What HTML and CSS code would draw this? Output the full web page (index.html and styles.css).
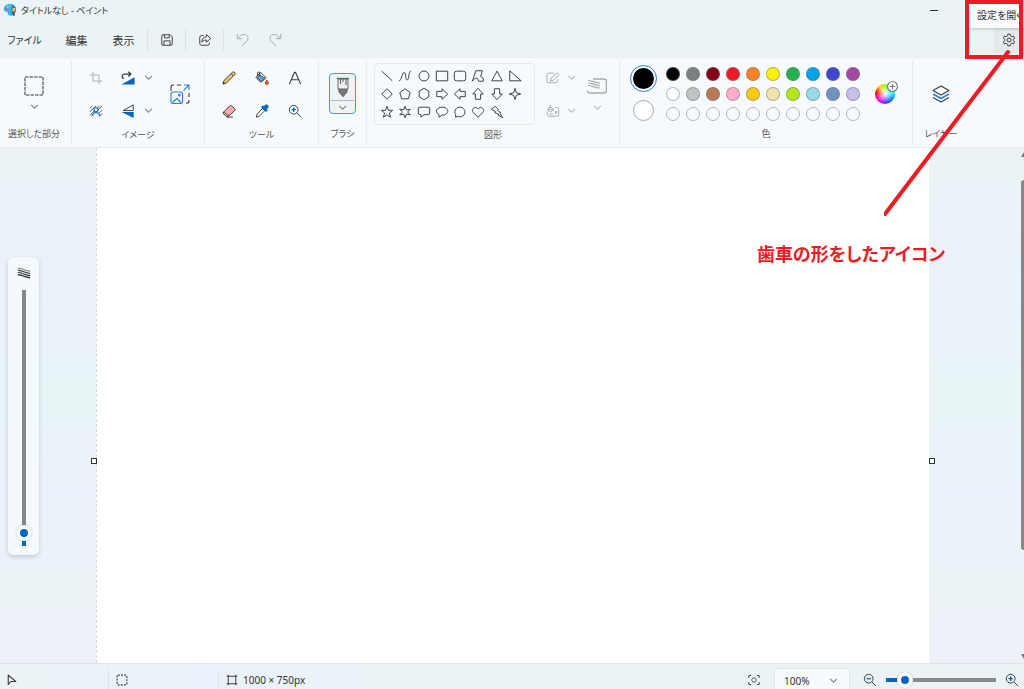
FILE: index.html
```html
<!DOCTYPE html>
<html lang="ja">
<head>
<meta charset="utf-8">
<meta name="viewport" content="width=device-width, initial-scale=1">
<title>タイトルなし - ペイント</title>
<link rel="stylesheet" href="styles.css">
</head>
<body>
<svg class="defs" aria-hidden="true">
  <symbol id="chevron" viewBox="0 0 8 8"><path d="M1 2.500 4 5.500 7 2.500"/></symbol>
</svg>
<div class="app">
  <header class="titlebar">
    <svg class="logo" viewBox="0 0 14 14" aria-hidden="true">
      <path d="M6.500 1C3 1 .8 3.500.8 6.300c0 2.200 1.700 2.400 2.900 2.500 1.200.1 1 1.200 1.300 2.300.4 1.300 2 1.900 3.600 1.300C11.500 11.500 13 9 13 6.500 13 3 10 1 6.500 1z" fill="#38b6ec"/>
      <path d="M8 1.200C11 1.700 13 4 13 6.500c0 2.600-1.600 5.100-4.400 5.900z" fill="#1787d4"/>
      <circle cx="3.300" cy="6.300" r="1" fill="#e8532f"/><circle cx="4.700" cy="3.800" r="1" fill="#ffd23f"/><circle cx="7.800" cy="3.200" r="1" fill="#6ee08a"/>
      <path d="M9.300 5h3l-.4 4h-2.200z" fill="#f2b45b"/><path d="M9.700 8.500h2.200L11.500 13h-1.300z" fill="#7a4a2a"/>
    </svg>
    <h1 class="title">タイトルなし - ペイント</h1>
    <button class="minimize" aria-label="最小化"></button>
  </header>

  <nav class="menubar" aria-label="メニュー">
    <button class="menu">ファイル</button>
    <button class="menu">編集</button>
    <button class="menu">表示</button>
    <button class="quick" aria-label="保存"><svg class="icon" viewBox="0 0 16 16"><path d="M3.500 2h8L14 4.500v8a1.500 1.500 0 0 1-1.500 1.500h-9A1.500 1.500 0 0 1 2 12.500v-9A1.500 1.500 0 0 1 3.500 2zM5 2v3.500h5.500V2M4.500 14V9h7v5"/></svg></button>
    <button class="quick" aria-label="共有"><svg class="icon" viewBox="0 0 16 16"><path d="M6.500 3H4a2 2 0 0 0-2 2v7a2 2 0 0 0 2 2h7a2 2 0 0 0 2-2v-1.500M9.500 1.800l5 4.400-5 4.300V8c-2.500 0-4 .8-5.200 2.500C4.500 7 6.500 4.500 9.500 4.300z"/></svg></button>
    <button class="quick history" aria-label="元に戻す" disabled><svg class="icon" viewBox="0 0 16 16"><path d="M1.500 1v5.500H7M1.800 6.200 5.500 2.800c4.500-3.600 10.500 1 7.500 5.700L6.500 15"/></svg></button>
    <button class="quick redo" aria-label="やり直し" disabled><svg class="icon" viewBox="0 0 16 16"><path d="M14.500 1v5.500H9M14.200 6.200 10.500 2.800C6-.8 0 3.800 3 8.500L9.500 15"/></svg></button>
    <button class="settings" aria-label="設定を開く"><svg class="icon gear" viewBox="0 0 16 16"><circle cx="8" cy="8" r="2.200"/><path d="M6.800 1.300h2.400l.5 2 1.500.9 2-.6 1.200 2.100L13 7.200v1.600l1.400 1.500-1.200 2.100-2-.6-1.500.9-.5 2H6.800l-.5-2-1.500-.9-2 .6-1.200-2.100L3 8.800V7.200L1.600 5.700l1.200-2.100 2 .6 1.500-.9z"/></svg></button>
  </nav>

  <main class="ribbon">
    <section class="group select-group">
      <div class="tools stack">
        <button class="tool large" aria-label="選択"><svg class="icon i20" viewBox="0 0 20 20"><rect x="1" y="1" width="18" height="18" stroke-dasharray="3.500 1"/></svg></button>
        <button class="more" aria-label="選択オプション"><svg class="chev"><use href="#chevron"/></svg></button>
      </div>
      <h2>選択した部分</h2>
    </section>

    <section class="group">
      <div class="tools image-tools">
        <button class="tool" aria-label="トリミング" disabled><svg class="icon" viewBox="0 0 16 16"><path d="M4.500 1v10.500H15M1 4.500h10.500V15"/></svg></button>
        <button class="tool" aria-label="回転"><svg class="icon" viewBox="0 0 16 16"><path d="M15.500 7v8.500H.5z" fill="#0067c0" stroke="none"/><path d="M3 9C0 6.500 1.500 3.500 4.500 3.500H11M8.300.8l3 2.700-3 2.700" stroke-width="1.400"/></svg></button>
        <button class="more" aria-label="回転オプション"><svg class="chev"><use href="#chevron"/></svg></button>
        <button class="tool resize" aria-label="サイズ変更"><svg class="icon i20" viewBox="0 0 20 20"><path d="M1 7V3a2 2 0 0 1 2-2h1M7 1h4M19 9v4M19 16v1a2 2 0 0 1-2 2h-1"/><g stroke="#2b7cd3"><rect x="1" y="8" width="11.500" height="11.500" rx="2"/><path d="m2.500 18.500 4.300-4 4.200 4M13.500 6.500l5-5M14 1h5v5"/><circle cx="9.300" cy="11.200" r=".8"/></g></svg></button>
        <button class="tool" aria-label="背景の削除"><svg class="icon" viewBox="0 0 16 16"><path d="M1 5l3-3M1 9l7-7M1 13 12 2M3 14 15 2M8 14l7-7M12 14l3-3" stroke-width="1"/><path d="M4 14c0-5.500 8-5.500 8 0" fill="#f7fafd" stroke="#2b7cd3" stroke-width="1.500"/><circle cx="8" cy="6.500" r="2.300" fill="#f7fafd" stroke="#2b7cd3" stroke-width="1.500"/></svg></button>
        <button class="tool" aria-label="反転"><svg class="icon" viewBox="0 0 16 16"><path d="M14 1v6.500H2.500z"/><path d="M14.500 9v7L.5 9z" fill="#0067c0" stroke="none"/></svg></button>
        <button class="more" aria-label="反転オプション"><svg class="chev"><use href="#chevron"/></svg></button>
      </div>
      <h2>イメージ</h2>
    </section>

    <section class="group">
      <div class="tools tool-grid">
        <button class="tool" aria-label="鉛筆"><svg class="icon" viewBox="0 0 16 16"><path d="M1.200 14.800l1-3.800L11.800 1.600a1.800 1.800 0 0 1 2.600 2.600L5 13.800z" fill="#f3c567"/><path d="m10.500 3 2.500 2.500"/><path d="m1.200 14.800 .5-2 1.500 1.500z" fill="#444"/></svg></button>
        <button class="tool" aria-label="塗りつぶし"><svg class="icon" viewBox="0 0 16 16"><path d="M6.500 1.500 12.500 7.500l-5 5a1 1 0 0 1-1.400 0L1.500 7.900a1 1 0 0 1 0-1.400z" fill="#fff"/><path d="m5 4.500 6.500 3.800-4.500 4L2.500 7.500z" fill="#5ea5e4"/><path d="M5.500 6V2.500a1.300 1.300 0 0 0-2.600 0V5"/><path d="M13.500 10c1 1.500 2 2.500 2 3.700a2 2 0 0 1-4 0c0-1.200 1-2.200 2-3.700z" fill="#e04e1b" stroke="#b73510" stroke-width=".6"/></svg></button>
        <button class="tool" aria-label="テキスト"><svg class="icon" viewBox="0 0 16 16"><path d="M1.500 15 7.500 1.500h1l6 13.500M4 10h8" stroke-width="1.300"/></svg></button>
        <button class="tool" aria-label="消しゴム"><svg class="icon" viewBox="0 0 16 16"><path d="M1.500 9.500 9 2a1.400 1.400 0 0 1 2 0l3.500 3.500a1.400 1.400 0 0 1 0 2L7.500 14H5.200L1.500 11z" fill="#f7aaa9"/><path d="m2 9.200 5.600 4.600L5.200 14 1.500 11z" fill="#fff"/><path d="M5.500 15h7"/></svg></button>
        <button class="tool" aria-label="色の選択"><svg class="icon" viewBox="0 0 16 16"><path d="m8.500 5 2.700 2.700-6.400 6.100L1.500 15l1-3.500z" fill="#fff"/><path d="m7.500 3.500 5.200 5.200 1.300-1.500-1-1.300 1.700-1.800A2 2 0 0 0 12 1.300L10.200 3 9 2z" fill="#0067c0" stroke="#0067c0"/></svg></button>
        <button class="tool" aria-label="拡大鏡"><svg class="icon" viewBox="0 0 16 16"><circle cx="6.500" cy="6.500" r="5"/><path d="m10.200 10.200 4.800 4.800"/><path d="M4 6.500h5M6.500 4v5" stroke="#0067c0" stroke-width="1.500"/></svg></button>
      </div>
      <h2>ツール</h2>
    </section>

    <section class="group brush-group">
      <div class="tools">
        <button class="brush" aria-label="ブラシ">
          <svg class="icon i20" viewBox="0 0 20 20"><path d="M5 2v9.500L6.500 13h7l1.500-1.500V2z" fill="#eee" stroke="#777"/><path d="M4 1.500h12" stroke="#666" stroke-width="1.300"/><path d="M7.500 2v5M10 2v3M13 2v6" stroke="#666"/><path d="M6 12h8v3l-4 4.500L6 15z" fill="#777" stroke="#666"/></svg>
          <span class="brush-more"><svg class="chev"><use href="#chevron"/></svg></span>
        </button>
      </div>
      <h2>ブラシ</h2>
    </section>

    <section class="group shapes-group">
      <div class="tools shapes-tools">
        <div class="shapes">
          <button aria-label="直線"><svg class="icon" viewBox="0 0 16 16"><path d="m2 2.500 12 11"/></svg></button>
          <button aria-label="曲線"><svg class="icon" viewBox="0 0 16 16"><path d="M1 13.500C4 14 4.500 4 7 4s1 8.500 3.500 8.500S11.500 3 15 2"/></svg></button>
          <button aria-label="楕円"><svg class="icon" viewBox="0 0 16 16"><circle cx="8" cy="8" r="5.700"/></svg></button>
          <button aria-label="四角形"><svg class="icon" viewBox="0 0 16 16"><path d="M1.500 2.500h13v11h-13z"/></svg></button>
          <button aria-label="角丸四角形"><svg class="icon" viewBox="0 0 16 16"><rect x="1.500" y="2.500" width="13" height="11" rx="2.500"/></svg></button>
          <button aria-label="多角形"><svg class="icon" viewBox="0 0 16 16"><path d="M1.500 14 5.500 2h7.500l-2 6.500 3 2V14H9l-2-3.500h-2z" /></svg></button>
          <button aria-label="三角形"><svg class="icon" viewBox="0 0 16 16"><path d="m8 2.500 6 11H2z"/></svg></button>
          <button aria-label="直角三角形"><svg class="icon" viewBox="0 0 16 16"><path d="M2 2v11.500h13z"/></svg></button>
          <button aria-label="ひし形"><svg class="icon" viewBox="0 0 16 16"><path d="m8 2 6 6-6 6-6-6z"/></svg></button>
          <button aria-label="五角形"><svg class="icon" viewBox="0 0 16 16"><path d="m8 2 6 4.500-2.300 7H4.300L2 6.500z"/></svg></button>
          <button aria-label="六角形"><svg class="icon" viewBox="0 0 16 16"><path d="m8 1.500 5.500 3.200v6.600L8 14.500l-5.500-3.200V4.700z"/></svg></button>
          <button aria-label="右矢印"><svg class="icon" viewBox="0 0 16 16"><path d="M2 5h6V2l6.500 6L8 14v-3H2z"/></svg></button>
          <button aria-label="左矢印"><svg class="icon" viewBox="0 0 16 16"><path d="M14 5H8V2L1.500 8 8 14v-3h6z"/></svg></button>
          <button aria-label="上矢印"><svg class="icon" viewBox="0 0 16 16"><path d="M5 14V8H2l6-6.500L14 8h-3v6z"/></svg></button>
          <button aria-label="下矢印"><svg class="icon" viewBox="0 0 16 16"><path d="M5 2v6H2l6 6.500L14 8h-3V2z"/></svg></button>
          <button aria-label="四角星"><svg class="icon" viewBox="0 0 16 16"><path d="m8 1.500 1.500 5 5 1.500-5 1.500-1.500 5-1.500-5-5-1.500 5-1.500z"/></svg></button>
          <button aria-label="五角星"><svg class="icon" viewBox="0 0 16 16"><path d="m8 1.500 1.700 4.600h4.800l-3.800 3 1.400 4.900L8 11.200 3.900 14l1.400-4.900-3.800-3h4.800z"/></svg></button>
          <button aria-label="六角星"><svg class="icon" viewBox="0 0 16 16"><path d="m8 1.500 1.500 4 4.500-.7L11 8l3 3.200-4.500-.7-1.500 4-1.500-4-4.500.7L5 8 2 4.800l4.500.7z"/></svg></button>
          <button aria-label="角丸吹き出し"><svg class="icon" viewBox="0 0 16 16"><path d="M3.500 2.500h9a2 2 0 0 1 2 2V9a2 2 0 0 1-2 2H8l-3.500 3v-3h-1a2 2 0 0 1-2-2V4.500a2 2 0 0 1 2-2z"/></svg></button>
          <button aria-label="円形吹き出し"><svg class="icon" viewBox="0 0 16 16"><path d="M4.500 14v-3.200C-1 8 2 2.500 8 2.500s8.500 4.500 5 7.500c-1 1-3 1.500-5 1.500z"/></svg></button>
          <button aria-label="雲形吹き出し"><svg class="icon" viewBox="0 0 16 16"><path d="M3 14v-3C1 8 2.500 3 7 2.500c5-.5 8 4.500 6 8-1.500 3-4.500 3.500-7 2.500z"/></svg></button>
          <button aria-label="ハート"><svg class="icon" viewBox="0 0 16 16"><path d="M8 14 2.500 8.500C-.5 5 4.500.5 8 4.500c3.500-4 8.500.5 5.500 4z"/></svg></button>
          <button aria-label="稲妻"><svg class="icon" viewBox="0 0 16 16"><path d="M6 1.500 9.500 5 8.500 6l4 3-1 .8 3 4.700-5.500-3 1-1-4.500-1.700 1-1L1.500 5z"/></svg></button>
        </div>
        <div class="shape-options">
          <button class="tool" aria-label="輪郭" disabled><svg class="icon" viewBox="0 0 16 16"><path d="M9.500 2.500H3a2 2 0 0 0-2 2v7a2 2 0 0 0 2 2h8a2 2 0 0 0 2-2v-2M5 11.500l1-3.500 7-6 2 2L8.500 10.500z"/></svg></button>
          <button class="more" aria-label="輪郭オプション" disabled><svg class="chev"><use href="#chevron"/></svg></button>
          <button class="tool" aria-label="塗りつぶし" disabled><svg class="icon" viewBox="0 0 16 16"><path d="M1.500 8.500V12a2 2 0 0 0 2 2h9a2 2 0 0 0 2-2V6a2 2 0 0 0-2-2H10M5 3 1.500 6.500 5 9.500 9 6.500zM5 1v4M2 6.500h6.500M11.500 8c1 2 1 3 0 3s-1-1 0-3zM4 11.500h4"/></svg></button>
          <button class="more" aria-label="塗りつぶしオプション" disabled><svg class="chev"><use href="#chevron"/></svg></button>
        </div>
        <div class="stack">
          <button class="tool large" aria-label="サイズ" disabled><svg class="icon i20" viewBox="0 0 20 20"><path d="M6 3h11a2.500 2.500 0 0 1 2.500 2.500v9A2.500 2.500 0 0 1 17 17H2.500C1 17 .5 16 .5 14.500" stroke-width="1.400"/><path d="M1 4.500c4 0 7 2.500 12 2.500M1 7c4 0 7 2.500 12 2.500M1 9.500c4 0 7 2.500 12 2.500"/></svg></button>
          <button class="more" aria-label="サイズオプション" disabled><svg class="chev"><use href="#chevron"/></svg></button>
        </div>
      </div>
      <h2>図形</h2>
    </section>

    <section class="group color-group">
      <div class="tools color-tools">
        <div class="current">
          <button class="primary" aria-label="色 1"></button>
          <button class="secondary" aria-label="色 2"></button>
        </div>
        <div class="swatches">
          <button style="--c:#000000" aria-label="黒"></button><button style="--c:#7f7f7f" aria-label="灰色"></button><button style="--c:#880015" aria-label="濃い赤"></button><button style="--c:#ed1c24" aria-label="赤"></button><button style="--c:#ff7f27" aria-label="オレンジ"></button><button style="--c:#fff200" aria-label="黄"></button><button style="--c:#22b14c" aria-label="緑"></button><button style="--c:#00a2e8" aria-label="青緑"></button><button style="--c:#3f48cc" aria-label="藍色"></button><button style="--c:#a349a4" aria-label="紫"></button>
          <button style="--c:#ffffff" aria-label="白"></button><button style="--c:#c3c3c3" aria-label="薄い灰色"></button><button style="--c:#b97a57" aria-label="茶"></button><button style="--c:#ffaec9" aria-label="ローズ"></button><button style="--c:#ffc90e" aria-label="ゴールド"></button><button style="--c:#efe4b0" aria-label="薄い黄"></button><button style="--c:#b5e61d" aria-label="ライム"></button><button style="--c:#99d9ea" aria-label="薄い青緑"></button><button style="--c:#7092be" aria-label="ブルーグレー"></button><button style="--c:#c8bfe7" aria-label="ラベンダー"></button>
          <button aria-label="空き 1"></button><button aria-label="空き 2"></button><button aria-label="空き 3"></button><button aria-label="空き 4"></button><button aria-label="空き 5"></button><button aria-label="空き 6"></button><button aria-label="空き 7"></button><button aria-label="空き 8"></button><button aria-label="空き 9"></button><button aria-label="空き 10"></button>
        </div>
        <button class="wheel" aria-label="色の編集"><svg class="plus" viewBox="0 0 10 10"><circle cx="5" cy="5" r="4.500"/><path d="M5 2.500v5M2.500 5h5"/></svg></button>
      </div>
      <h2>色</h2>
    </section>

    <section class="group layer-group">
      <div class="tools">
        <button class="tool large" aria-label="レイヤー"><svg class="icon i20" viewBox="0 0 20 20"><path d="m10 2 8 4.500-8 4.500-8-4.500z"/><path d="m2 10 8 4.500 8-4.500" stroke="#2b7cd3" stroke-width="1.500"/><path d="m2 13.500 8 4.500 8-4.500"/></svg></button>
      </div>
      <h2>レイヤー</h2>
    </section>
  </main>

  <div class="workspace">
    <aside class="gutter">
      <div class="size-panel">
        <svg class="icon" viewBox="0 0 16 16" aria-hidden="true"><path d="M1 2.500c5 0 8 3 14 3.500" stroke-width=".8"/><path d="M1 5c5 0 8 3 14 3.500M1 7.500c5 0 8 3 14 3.500" stroke-width="1.200"/><path d="M1 10c5 0 8 3 14 3.500" stroke-width="1.700"/></svg>
        <input class="range size-range" type="range" min="0" max="100" value="2" aria-label="ブラシのサイズ">
      </div>
    </aside>
    <div class="canvas"><i class="handle left"></i><i class="handle right"></i></div>
    <div class="margin"></div>
    <div class="scrollbar"><span class="arrow up"></span><span class="thumb"></span><span class="arrow down"></span></div>
  </div>

  <footer class="status">
    <div class="cell"><svg class="icon i12" viewBox="0 0 16 16"><path d="M3 1.500v12.500l3.500-4H13z" stroke-width="1.500"/></svg></div>
    <div class="cell"><svg class="icon i12" viewBox="0 0 16 16"><rect x="1.500" y="1.500" width="13" height="13" rx="1" stroke-dasharray="2.500 1.700" stroke-width="1.500"/></svg></div>
    <div class="cell size"><svg class="icon i12" viewBox="0 0 16 16"><path d="M3 1v14M13 1v14M1 3h14M1 13h14" stroke-width="1.300"/></svg><span>1000 × 750px</span></div>
    <button class="fit" aria-label="ウィンドウに合わせる"><svg class="icon i12" viewBox="0 0 16 16"><circle cx="8" cy="8" r="3"/><path d="M1 5V3.500A1.500 1.500 0 0 1 2.500 2H4M12 2h1.500A1.500 1.500 0 0 1 15 3.500V5M15 11v1.500a1.500 1.500 0 0 1-1.500 1.500H12M4 14H2.500A1.500 1.500 0 0 1 1 12.500V11" stroke-width="1.400"/></svg></button>
    <div class="zoom-select"><select aria-label="ズーム"><option>100%</option></select><svg class="chev"><use href="#chevron"/></svg></div>
    <button class="zoom" aria-label="縮小"><svg class="icon" viewBox="0 0 16 16"><circle cx="6.500" cy="6.500" r="5"/><path d="m10.200 10.200 4.800 4.800"/><path d="M4 6.500h5" stroke="#0067c0" stroke-width="1.500"/></svg></button>
    <input class="range zoom-range" type="range" min="0" max="100" value="12" aria-label="ズーム率">
    <button class="zoom" aria-label="拡大"><svg class="icon" viewBox="0 0 16 16"><circle cx="6.500" cy="6.500" r="5"/><path d="m10.200 10.200 4.800 4.800"/><path d="M4 6.500h5M6.500 4v5" stroke="#0067c0" stroke-width="1.500"/></svg></button>
  </footer>

  <div class="tooltip" role="tooltip">設定を開く</div>
  <div class="callout">
    <svg class="pointer" viewBox="0 0 140 220" aria-hidden="true"><rect x="83" y="2" width="54" height="55"/><path d="M124 52 1 214"/></svg>
    <p>歯車の形をしたアイコン</p>
  </div>
</div>
</body>
</html>
```
FILE: styles.css
```css
* { box-sizing: border-box; }

body {
  margin: 0;
  font-family: "Noto Sans", "Noto Sans CJK JP", sans-serif;
  font-size: 11px;
  color: #333;
  font-feature-settings: "palt";
}

button {
  display: flex;
  align-items: center;
  justify-content: center;
  padding: 0;
  border: 0;
  background: none;
  color: inherit;
  font: inherit;
  font-feature-settings: inherit;
}

.defs { display: none; }

.app {
  position: relative;
  display: flex;
  flex-direction: column;
  height: 100vh;
  overflow: hidden;
  background: #ebf3f7;
}

.icon {
  flex: none;
  width: 14px;
  height: 14px;
  fill: none;
  stroke: #3b3b3b;
  stroke-width: 1.1;
  stroke-linejoin: round;
}
.i20 { width: 20px; height: 20px; }
.i12 { width: 12px; height: 12px; }
.chev {
  flex: none;
  width: 9px;
  height: 9px;
  fill: none;
  stroke: #888;
}
button:disabled .icon { stroke: #aaa; }
button:disabled .chev { stroke: #bbb; }

/* Title bar and menu */
.titlebar {
  display: flex;
  align-items: center;
  flex: none;
  height: 22px;
  padding: 0 84px 2px 3px;
}
.logo { width: 14px; height: 14px; }
.title {
  flex: 1;
  margin: 0 0 0 4px;
  font-size: 9px;
  font-weight: 400;
}
.minimize { width: 12px; height: 20px; }
.minimize::before {
  content: "";
  width: 8px;
  height: 1px;
  background: #333;
}
.menubar {
  display: flex;
  align-items: center;
  flex: none;
  height: 36px;
  border-bottom: 1px solid #e8eef2;
}
.menu { width: 47px; height: 28px; }
.menu:first-child { width: 49px; margin-right: 4px; font-size: 10px; }
.quick {
  width: 38px;
  height: 22px;
  border-left: 1px solid #dce3e8;
}
.redo { width: 28px; border: 0; }
.settings {
  width: 30px;
  height: 26px;
  margin-left: auto;
  background: #e3eaee;
}

/* Ribbon */
.ribbon {
  display: flex;
  flex: none;
  height: 90px;
  padding: 3px 0;
  background: #f7fafd;
  border-bottom: 1px solid #e6ebef;
}
.group {
  display: flex;
  flex-direction: column;
  padding-bottom: 2px;
  border-right: 1px solid #e6ebef;
}
.group:last-child { border: 0; }
.group h2 {
  margin: 0;
  font-size: 9px;
  line-height: 16px;
  font-weight: 400;
  text-align: center;
  white-space: nowrap;
  color: #555;
}
.tools {
  display: flex;
  align-items: center;
  justify-content: center;
  flex: 1;
}
.tool { width: 24px; height: 33px; }
.more { width: 12px; height: 33px; }
.stack {
  display: flex;
  flex-direction: column;
  align-items: center;
  gap: 2px;
}
.stack .large { width: 24px; height: 24px; }
.stack .more { height: 14px; }
.select-group { width: 72px; padding-right: 3px; }
.image-tools {
  display: grid;
  grid-template-columns: 24px 24px 12px 24px;
  column-gap: 8px;
  align-content: center;
  padding: 0 12px;
}
.image-tools .more { margin-left: -6px; }
.resize { grid-column: 4; grid-row: 1 / 3; align-self: center; }
.tool-grid {
  display: grid;
  grid-template-columns: repeat(3, 33px);
  align-content: center;
  padding: 0 7px;
}
.tool-grid .tool { width: 33px; }
.brush-group { width: 48px; }
.brush {
  flex-direction: column;
  width: 27px;
  height: 41px;
  border: 1px solid #4a94d8;
  border-radius: 4px;
  background: #f0f3f6;
}
.brush .icon { flex: 1; }
.brush-more {
  display: flex;
  align-items: center;
  justify-content: center;
  width: 23px;
  height: 13px;
  border-top: 1px solid #b8bcc0;
}
.shapes-tools { padding: 0 10px 0 7px; }
.shapes {
  display: grid;
  grid-template-columns: repeat(8, 1fr);
  width: 161px;
  padding: 3px 10px 3px 3px;
  border: 1px solid #e6eaee;
  border-radius: 4px;
}
.shapes button { height: 18px; }
.shape-options {
  display: grid;
  grid-template-columns: 24px 12px;
  margin: 0 8px 0 6px;
}
.color-tools { gap: 6px; padding: 0 17px 0 10px; }
.current {
  display: flex;
  flex-direction: column;
  align-items: center;
  gap: 8px;
  padding-bottom: 2px;
}
.current button { border-radius: 50%; }
.primary {
  width: 27px;
  height: 27px;
  border: 1px solid #2b7cd3;
}
.primary::before {
  content: "";
  width: 21px;
  height: 21px;
  border-radius: 50%;
  background: #000;
}
.secondary {
  width: 21px;
  height: 21px;
  border: 1px solid #aaa;
  background: #fff;
}
.swatches {
  display: grid;
  grid-template-columns: repeat(10, 14px);
  gap: 6px;
  padding: 0 3px;
}
.swatches button {
  height: 14px;
  border: 1px solid rgb(110 120 125 / 50%);
  border-radius: 50%;
  background: var(--c, transparent);
}
.wheel {
  position: relative;
  width: 20px;
  height: 20px;
  margin-left: 6px;
  border-radius: 50%;
  background: radial-gradient(circle, #fff 0, transparent 65%), conic-gradient(from 0deg, #9f0, #0f9 45deg, #0ff 80deg, #08f 120deg, #33f 165deg, #a0f 200deg, #f0c 235deg, #f00 280deg, #fc0 325deg, #9f0);
}
.plus {
  position: absolute;
  top: -3px;
  right: -3px;
  width: 11px;
  height: 11px;
  fill: #fff;
  stroke: #777;
}
.layer-group { width: 56px; }

/* Drawing area */
.workspace {
  position: relative;
  display: flex;
  flex: 1;
  min-height: 0;
  background: linear-gradient(#ebf3f6, #eaf2fa 28%, #e8f4f6 48%, #ebf2fb 67%, #ecf3f6 85%, #edf2fa);
}
.gutter { flex: none; width: 96px; padding: 109px 8px 0; }
.size-panel {
  display: flex;
  flex-direction: column;
  align-items: center;
  gap: 10px;
  width: 31px;
  padding: 9px 0;
  border-radius: 6px;
  background: #f4f9fc;
  box-shadow: 0 2px 5px rgb(0 30 60 / 18%);
}
.canvas {
  position: relative;
  flex: 1;
  background: #fff;
  border-left: 1px dashed #d5dadd;
}
.handle {
  position: absolute;
  top: 310px;
  width: 6px;
  height: 6px;
  border: 1px solid #333;
  background: #fff;
}
.handle.left { left: -6px; }
.handle.right { right: -6px; }
.margin { flex: none; width: 92px; }
.scrollbar {
  display: flex;
  flex-direction: column;
  width: 3px;
  padding: 4px 0;
  overflow: hidden;
}
.arrow {
  flex: none;
  width: 6px;
  height: 5px;
  background: #777;
}
.up { clip-path: polygon(50% 0, 100% 100%, 0 100%); }
.down { margin-top: auto; clip-path: polygon(0 0, 100% 0, 50% 100%); }
.thumb {
  height: 73%;
  margin-top: 23px;
  border-radius: 3px 0 0 3px;
  background: #868889;
}

/* Sliders */
.range {
  margin: 0;
  appearance: none;
  background: transparent;
}
.range::-webkit-slider-thumb {
  appearance: none;
  width: 16px;
  height: 16px;
  border: 4px solid #fff;
  border-radius: 50%;
  background: #0067c0;
  box-shadow: 0 0 1px rgb(0 0 0 / 40%);
}
.size-range {
  width: 16px;
  height: 256px;
  writing-mode: vertical-lr;
  direction: rtl;
  background: linear-gradient(#868889 96%, #0067c0 96%) center / 4px 100% no-repeat;
}
.zoom-range {
  width: 110px;
  height: 16px;
  background: linear-gradient(90deg, #0067c0 16%, #868889 16%) center / 100% 4px no-repeat;
}

/* Status bar */
.status {
  display: flex;
  flex: none;
  align-items: center;
  height: 26px;
  padding: 6px 4px 0 0;
  border-top: 1px solid #dfe5e9;
  background: linear-gradient(90deg, #ebf3f6, #ebf1fa 20%, #ebf3f6 40%, #ebf3f6);
}
.cell {
  display: flex;
  align-items: center;
  gap: 5px;
  width: 110px;
  height: 19px;
  padding-left: 7px;
  border-left: 1px solid #dce3e8;
  font-size: 10px;
}
.cell:first-child { width: 108px; padding-left: 6px; border: 0; }
.fit { width: 24px; height: 20px; margin-left: auto; }
.zoom-select {
  position: relative;
  align-self: flex-start;
  width: 76px;
  height: 26px;
  margin: -2px 12px 0 8px;
}
.zoom-select select {
  width: 100%;
  height: 100%;
  padding: 0 9px;
  appearance: none;
  border: 1px solid #dde8ef;
  border-radius: 4px;
  background: #f8fbfd;
  color: #333;
  font: 10px "Noto Sans", sans-serif;
}
.zoom-select .chev { position: absolute; top: 8px; right: 12px; }
.zoom { width: 16px; height: 20px; }
.zoom-range { margin: 0 8px; }

/* Callout over the window */
.tooltip {
  position: absolute;
  top: 2px;
  right: 0;
  width: 56px;
  height: 26px;
  padding-left: 9px;
  overflow: hidden;
  background: #f8fafb;
  box-shadow: 0 1px 3px rgb(0 0 0 / 20%);
  font-size: 10px;
  line-height: 26px;
  white-space: nowrap;
}
.callout {
  position: absolute;
  top: 0;
  right: 0;
  display: flex;
  flex-direction: column;
  align-items: flex-end;
  pointer-events: none;
}
.pointer {
  width: 140px;
  height: 220px;
  fill: none;
  stroke: #ed1c24;
  stroke-width: 4;
  stroke-linecap: round;
}
.callout p {
  margin: 21px 79px 0 0;
  color: #ed1c24;
  font-size: 18px;
  line-height: 26px;
  font-weight: 700;
}
```
